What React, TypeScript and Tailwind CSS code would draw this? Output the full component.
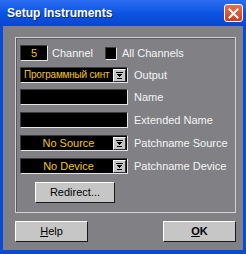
import React from 'react';

const font = { fontFamily: '"Liberation Sans", Arial, sans-serif' };

function DropArrow() {
  return (
    <div className="shrink-0 w-[13px] h-[13px] bg-[#c4c4c4] border-t border-l border-t-white border-l-white border-b border-r border-b-[#303030] border-r-[#303030] flex items-center justify-center">
      <svg width="7" height="7" viewBox="0 0 7 7" shapeRendering="crispEdges">
        <rect x="0" y="0" width="7" height="1" fill="#000" />
        <polygon points="1,2 6,2 3.5,5" fill="#000" />
        <rect x="1" y="6" width="5" height="1" fill="#000" />
      </svg>
    </div>
  );
}

function Field({ children, drop, center, tight }: { children?: React.ReactNode; drop?: boolean; center?: boolean; tight?: boolean }) {
  return (
    <div className="shrink-0 w-[108px] h-[16px] bg-black border-t border-l border-t-[#3c3c3c] border-l-[#3c3c3c] border-b border-r border-b-[#e4e4e4] border-r-[#e4e4e4] flex items-center pl-[3px] pr-[1px] overflow-hidden">
      <span
        className={`flex-1 min-w-0 leading-none text-[#f2c417] whitespace-nowrap overflow-hidden ${center ? 'text-center' : ''} ${tight ? 'text-[10px] tracking-[-0.2px]' : 'text-[11px]'}`}
      >
        {children}
      </span>
      {drop && <DropArrow />}
    </div>
  );
}

function Row({ mt, children, label }: { mt: string; children: React.ReactNode; label: string }) {
  return (
    <div className={`flex items-center h-[16px] ${mt}`}>
      {children}
      <span className="ml-[6px] text-[11px] text-[#f4f4f4] leading-none whitespace-nowrap">{label}</span>
    </div>
  );
}

function Button({ children, w }: { children: React.ReactNode; w: string }) {
  return (
    <div
      className={`${w} h-[21px] bg-[#c6c6c6] border-t border-l border-t-white border-l-white border-b border-r border-b-[#1a1a1a] border-r-[#1a1a1a] flex items-center justify-center text-[11px] text-black`}
    >
      {children}
    </div>
  );
}

export default function App() {
  return (
    <div className="w-[246px] h-[254px] bg-[#0a4ad8] flex flex-col" style={font}>
      <div className="h-[26px] flex items-center justify-between pl-[7px] pr-[3px] bg-gradient-to-b from-[#2c6ef2] via-[#0a55e2] to-[#0a46d0]">
        <span className="text-white text-[12px] font-bold" style={{ textShadow: '1px 1px 0 #0a2a80' }}>
          Setup Instruments
        </span>
        <div className="w-[19px] h-[18px] rounded-[3px] border border-white bg-gradient-to-b from-[#e8704c] to-[#c8401e] flex items-center justify-center">
          <svg width="11" height="11" viewBox="0 0 11 11">
            <path d="M1.5 1.5 L9.5 9.5 M9.5 1.5 L1.5 9.5" stroke="#fff" strokeWidth="2" strokeLinecap="square" />
          </svg>
        </div>
      </div>

      <div className="flex-1 mx-[3px] mb-[4px] bg-[#818185] flex flex-col pl-[12px] pr-[7px] pt-[11px]">
        <div className="h-[176px] border border-[#d2d2d2] shadow-[inset_1px_1px_0_#5a5a5e] flex flex-col pl-[4px] pt-[7px]">
          <div className="flex items-center h-[16px]">
            <div className="w-[28px] h-[16px] bg-black border-t border-l border-t-[#3c3c3c] border-l-[#3c3c3c] border-b border-r border-b-[#e4e4e4] border-r-[#e4e4e4] flex items-center justify-center text-[11px] leading-none text-[#f2c417]">
              5
            </div>
            <span className="ml-[4px] text-[11px] leading-none text-[#f4f4f4]">Channel</span>
            <div className="ml-[12px] w-[12px] h-[13px] bg-black border-t border-l border-t-[#3c3c3c] border-l-[#3c3c3c] border-b border-r border-b-[#e4e4e4] border-r-[#e4e4e4]" />
            <span className="ml-[5px] text-[11px] leading-none text-[#f4f4f4] whitespace-nowrap">All Channels</span>
          </div>

          <Row mt="mt-[6px]" label="Output">
            <Field drop tight>Программный синт</Field>
          </Row>
          <Row mt="mt-[6px]" label="Name">
            <Field />
          </Row>
          <Row mt="mt-[7px]" label="Extended Name">
            <Field />
          </Row>
          <Row mt="mt-[7px]" label="Patchname Source">
            <Field drop center>No Source</Field>
          </Row>
          <Row mt="mt-[7px]" label="Patchname Device">
            <Field drop center>No Device</Field>
          </Row>

          <div className="mt-[8px] ml-[15px]">
            <Button w="w-[80px]">Redirect...</Button>
          </div>
        </div>

        <div className="flex justify-between mt-[8px]">
          <Button w="w-[73px]">
            <span>
              <span className="underline">H</span>elp
            </span>
          </Button>
          <Button w="w-[73px]">
            <span className="font-bold">
              <span className="underline">O</span>K
            </span>
          </Button>
        </div>
      </div>
    </div>
  );
}
